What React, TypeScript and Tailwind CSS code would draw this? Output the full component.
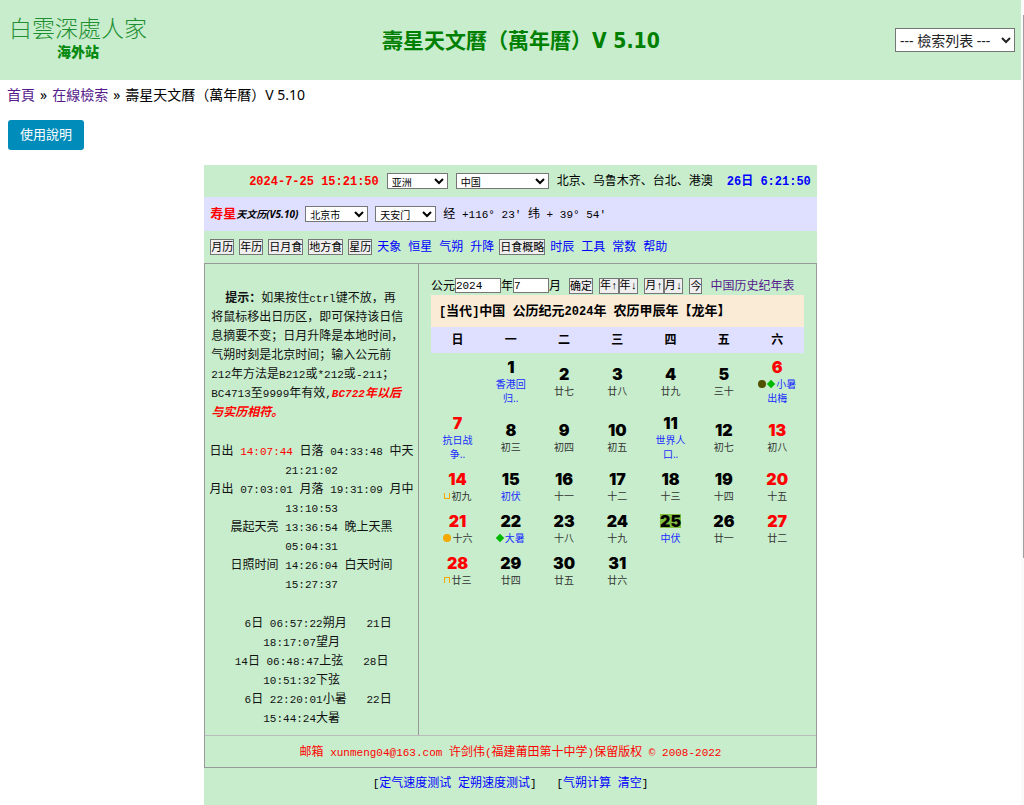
import type { ReactNode } from "react";
import clsx from "clsx";

type Mark = "new" | "full" | "first" | "last" | "term";

interface Day {
  n: number;
  lunar: string;
  more?: string;
  marks?: Mark[];
  blue?: boolean;
}

const WEEKDAYS = ["日", "一", "二", "三", "四", "五", "六"];

const WEEKS: (Day | null)[][] = [
  [
    null,
    { n: 1, lunar: "香港回", more: "归..", blue: true },
    { n: 2, lunar: "廿七" },
    { n: 3, lunar: "廿八" },
    { n: 4, lunar: "廿九" },
    { n: 5, lunar: "三十" },
    { n: 6, lunar: "小暑", more: "出梅", blue: true, marks: ["new", "term"] },
  ],
  [
    { n: 7, lunar: "抗日战", more: "争..", blue: true },
    { n: 8, lunar: "初三" },
    { n: 9, lunar: "初四" },
    { n: 10, lunar: "初五" },
    { n: 11, lunar: "世界人", more: "口..", blue: true },
    { n: 12, lunar: "初七" },
    { n: 13, lunar: "初八" },
  ],
  [
    { n: 14, lunar: "初九", marks: ["first"] },
    { n: 15, lunar: "初伏", blue: true },
    { n: 16, lunar: "十一" },
    { n: 17, lunar: "十二" },
    { n: 18, lunar: "十三" },
    { n: 19, lunar: "十四" },
    { n: 20, lunar: "十五" },
  ],
  [
    { n: 21, lunar: "十六", marks: ["full"] },
    { n: 22, lunar: "大暑", blue: true, marks: ["term"] },
    { n: 23, lunar: "十八" },
    { n: 24, lunar: "十九" },
    { n: 25, lunar: "中伏", blue: true },
    { n: 26, lunar: "廿一" },
    { n: 27, lunar: "廿二" },
  ],
  [
    { n: 28, lunar: "廿三", marks: ["last"] },
    { n: 29, lunar: "廿四" },
    { n: 30, lunar: "廿五" },
    { n: 31, lunar: "廿六" },
    null,
    null,
    null,
  ],
];

const TODAY = 25;

const MARK_CLASS: Record<Mark, string> = {
  new: "size-2 rounded-full bg-[#505000]",
  full: "size-2 rounded-full bg-[#f5a800]",
  first: "size-1.5 border border-t-0 border-[#f5a800]",
  last: "size-1.5 border border-b-0 border-[#f5a800]",
  term: "size-1.5 rotate-45 bg-[#00b800]",
};

// Latin runs are set in a narrower monospace so they line up as half-width
function Mixed({ text, size = "text-[11px]" }: { text: string; size?: string }) {
  return (
    <>
      {text.split(/([\x20-\x7e°©↑↓]+)/).map((part, i) =>
        i % 2 ? (
          <span
            key={i}
            className={clsx(
              "font-['Liberation_Mono',monospace] leading-none whitespace-pre",
              size,
            )}
          >
            {part}
          </span>
        ) : (
          part
        ),
      )}
    </>
  );
}

function Btn({ children }: { children: ReactNode }) {
  return (
    <button
      type="button"
      className="h-4 shrink-0 border border-[#767676] bg-[#efefef] text-[11px] leading-3 text-black"
    >
      {children}
    </button>
  );
}

function NavLink({ children }: { children: ReactNode }) {
  return (
    <a href="#" className="text-[#0000ff]">
      {children}
    </a>
  );
}

function Picker({ label, value, className }: { label: string; value: string; className: string }) {
  return (
    <select
      aria-label={label}
      defaultValue={value}
      className={clsx("h-4 border border-[#767676] bg-white text-[10px] leading-none", className)}
    >
      <option>{value}</option>
    </select>
  );
}

function DayCell({ day, weekend }: { day: Day | null; weekend: boolean }) {
  if (!day) return <td />;
  return (
    <td className="py-1 text-center align-middle">
      <div
        className={clsx(
          "font-['Inter','Liberation_Sans',sans-serif] text-base leading-5 font-black",
          weekend ? "text-[#ff0000]" : "text-black",
        )}
      >
        {day.n === TODAY ? (
          <span className="inline-block bg-[#82bf3f] leading-[14px]">{day.n}</span>
        ) : (
          day.n
        )}
      </div>
      <div
        className={clsx("text-[10px] leading-[14px]", day.blue ? "text-[#1a2cff]" : "text-[#333]")}
      >
        <div className="flex items-center justify-center gap-0.5">
          {day.marks?.map((m) => <i key={m} className={MARK_CLASS[m]} />)}
          <span>{day.lunar}</span>
        </div>
        {day.more && <div>{day.more}</div>}
      </div>
    </td>
  );
}

function Toolbar() {
  return (
    <>
      <div className="flex h-8 items-center justify-end gap-2 pr-1.5">
        <b className="text-[#ff0000]">
          <Mixed text="2024-7-25 15:21:50" size="text-xs" />
        </b>
        <Picker label="洲" value="亚洲" className="w-[61px]" />
        <Picker label="国家" value="中国" className="w-[93px]" />
        <span>北京、乌鲁木齐、台北、港澳</span>
        <b className="ml-1.5 text-[#0000ff]">
          <Mixed text="26日 6:21:50" size="text-xs" />
        </b>
      </div>
      <div className="flex h-[34px] items-center gap-[7px] bg-[#dfdfff] pl-1.5">
        <span className="whitespace-nowrap">
          <b className="text-[13px] text-[#ff0000]">寿星</b>
          <b className="text-[10px] italic">天文历(V5.10)</b>
        </span>
        <Picker label="城市" value="北京市" className="w-[63px]" />
        <Picker label="地点" value="天安门" className="w-[61px]" />
        <span>
          <Mixed text="经 +116° 23' 纬 + 39° 54'" />
        </span>
      </div>
      <nav className="flex h-8 items-center gap-[5px] pl-1.5">
        <Btn>月历</Btn>
        <Btn>年历</Btn>
        <Btn>日月食</Btn>
        <Btn>地方食</Btn>
        <Btn>星历</Btn>
        <span className="flex gap-[7px]">
          <NavLink>天象</NavLink>
          <NavLink>恒星</NavLink>
          <NavLink>气朔</NavLink>
          <NavLink>升降</NavLink>
        </span>
        <Btn>日食概略</Btn>
        <span className="flex gap-[7px]">
          <NavLink>时辰</NavLink>
          <NavLink>工具</NavLink>
          <NavLink>常数</NavLink>
          <NavLink>帮助</NavLink>
        </span>
      </nav>
    </>
  );
}

const SUN_LINES = [
  "21:21:02",
  "月出 07:03:01 月落 19:31:09 月中",
  "13:10:53",
  "晨起天亮 13:36:54 晚上天黑",
  "05:04:31",
  "日照时间 14:26:04 白天时间",
  "15:27:37",
];

const TERM_LINES = [
  "  6日 06:57:22朔月   21日",
  "18:17:07望月   ",
  "14日 06:48:47上弦   28日",
  "10:51:32下弦   ",
  "  6日 22:20:01小暑   22日",
  "15:44:24大暑   ",
];

function InfoPanel() {
  return (
    <div className="w-[35%] shrink-0 border-r border-[#999] pt-6 text-xs leading-[19px] whitespace-nowrap text-[#111]">
      <p className="pl-1.5">
        <b className="pl-3.5">提示：</b>
        <Mixed text="如果按住ctrl键不放，再" />
        <br />
        将鼠标移出日历区，即可保持该日信
        <br />
        息摘要不变；日月升降是本地时间，
        <br />
        气朔时刻是北京时间；输入公元前
        <br />
        <Mixed text="212年方法是B212或*212或-211；" />
        <br />
        <Mixed text="BC4713至9999年有效," />
        <b className="text-[#ff0000] italic">
          <Mixed text="BC722年以后" />
          <br />
          与实历相符。
        </b>
      </p>
      <div className="mt-5 text-center">
        <p>
          <Mixed text="日出 " />
          <span className="text-[#ff0000]">
            <Mixed text="14:07:44" />
          </span>
          <Mixed text=" 日落 04:33:48 中天" />
        </p>
        {SUN_LINES.map((line) => (
          <p key={line}>
            <Mixed text={line} />
          </p>
        ))}
      </div>
      <div className="mt-5 pb-2 text-center">
        {TERM_LINES.map((line) => (
          <p key={line}>
            <Mixed text={line} />
          </p>
        ))}
      </div>
    </div>
  );
}

function Calendar() {
  return (
    <div className="min-w-0 flex-1 px-3 pt-3">
      <form className="flex h-[19px] items-center whitespace-nowrap">
        <label className="flex items-center">
          公元
          <input
            defaultValue="2024"
            className="h-[15px] w-[46px] border border-[#767676] bg-white font-['Liberation_Mono',monospace] text-[11px]"
          />
        </label>
        <label className="flex items-center">
          年
          <input
            defaultValue="7"
            className="h-[15px] w-9 border border-[#767676] bg-white font-['Liberation_Mono',monospace] text-[11px]"
          />
        </label>
        月
        <span className="ml-2 flex gap-1.5">
          <Btn>确定</Btn>
          <span className="flex">
            <Btn>
              <Mixed text="年↑" />
            </Btn>
            <Btn>
              <Mixed text="年↓" />
            </Btn>
          </span>
          <span className="flex">
            <Btn>
              <Mixed text="月↑" />
            </Btn>
            <Btn>
              <Mixed text="月↓" />
            </Btn>
          </span>
          <Btn>今</Btn>
        </span>
        <a href="#" className="ml-2 text-[#551a8b]">
          中国历史纪年表
        </a>
      </form>
      <table className="w-full table-fixed border-collapse">
        <caption className="h-8 bg-[#faebd7] pl-2 text-left text-[13px] leading-[30px] font-bold whitespace-nowrap">
          <Mixed text="[当代]中国 公历纪元2024年 农历甲辰年【龙年】" size="text-xs" />
        </caption>
        <thead>
          <tr className="h-[26px] bg-[#dfdfff]">
            {WEEKDAYS.map((d) => (
              <th key={d} scope="col" className="text-xs font-bold">
                {d}
              </th>
            ))}
          </tr>
        </thead>
        <tbody>
          {WEEKS.map((week, w) => (
            <tr key={w}>
              {week.map((day, i) => (
                <DayCell key={i} day={day} weekend={i === 0 || i === 6} />
              ))}
            </tr>
          ))}
        </tbody>
      </table>
    </div>
  );
}

export default function App() {
  return (
    <div className="flex min-h-screen bg-white font-['Noto_Sans','Noto_Sans_CJK_TC',sans-serif] text-black">
      <div className="flex min-w-0 flex-1 flex-col">
        <header className="flex h-20 items-center justify-between bg-[#c7edcc] pr-1.5 pl-[9px]">
          <a href="#" className="pb-1 text-center text-[#1f8f32]">
            <span className="block text-[23px] leading-7 font-light">白雲深處人家</span>
            <span className="block text-sm leading-5 font-black text-[#078a10]">海外站</span>
          </a>
          <h1 className="pt-1 font-['DejaVu_Sans_Condensed','Noto_Sans_CJK_TC',sans-serif] text-[21px] font-bold text-[#008000]">
            壽星天文曆（萬年曆）V 5.10
          </h1>
          <select
            aria-label="檢索列表"
            className="h-6 w-[120px] border border-[#767676] bg-white text-sm leading-5 text-[#222]"
          >
            <option>--- 檢索列表 ---</option>
          </select>
        </header>

        <nav className="flex gap-[5px] px-[7px] pt-1 text-sm leading-[22px]">
          <a href="#" className="text-[#551a8b]">
            首頁
          </a>
          <span>»</span>
          <a href="#" className="text-[#551a8b]">
            在線檢索
          </a>
          <span>»</span>
          <span>壽星天文曆（萬年曆）V 5.10</span>
        </nav>
        <div className="px-2 pt-3.5">
          <button
            type="button"
            className="h-[30px] w-[76px] rounded-[3px] bg-[#008cba] text-[13px] text-white"
          >
            使用說明
          </button>
        </div>

        <main className="mx-auto mt-[15px] w-3/5 flex-1 bg-[#c7edcc] font-['Noto_Sans','Noto_Sans_CJK_SC',sans-serif] text-xs whitespace-nowrap">
          <Toolbar />
          <div className="border border-[#999]">
            <div className="flex">
              <InfoPanel />
              <Calendar />
            </div>
            <p className="border-t border-[#bbb] text-center leading-[31px] text-[#ff0000]">
              <Mixed text="邮箱 xunmeng04@163.com 许剑伟(福建莆田第十中学)保留版权 © 2008-2022" />
            </p>
          </div>
          <p className="text-center leading-[30px]">
            <Mixed text="[" />
            <NavLink>定气速度测试</NavLink>
            <Mixed text=" " />
            <NavLink>定朔速度测试</NavLink>
            <Mixed text="]   [" />
            <NavLink>气朔计算</NavLink>
            <Mixed text=" " />
            <NavLink>清空</NavLink>
            <Mixed text="]" />
          </p>
        </main>
      </div>
      <div className="flex w-[3px] justify-end bg-[#fafafa]">
        <div className="mt-[15px] h-[543px] w-px bg-[#a0a0a0]" />
      </div>
    </div>
  );
}
